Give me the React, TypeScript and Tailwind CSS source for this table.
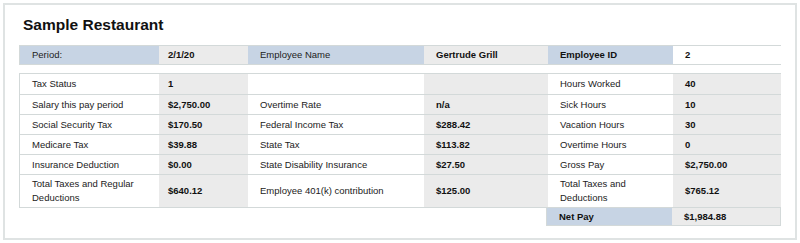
import React from 'react';

type Row = [string, string, string, string, string, string];

const rows: Row[] = [
  ['Tax Status', '1', '', '', 'Hours Worked', '40'],
  ['Salary this pay period', '$2,750.00', 'Overtime Rate', 'n/a', 'Sick Hours', '10'],
  ['Social Security Tax', '$170.50', 'Federal Income Tax', '$288.42', 'Vacation Hours', '30'],
  ['Medicare Tax', '$39.88', 'State Tax', '$113.82', 'Overtime Hours', '0'],
  ['Insurance Deduction', '$0.00', 'State Disability Insurance', '$27.50', 'Gross Pay', '$2,750.00'],
  ['Total Taxes and Regular Deductions', '$640.12', 'Employee 401(k) contribution', '$125.00', 'Total Taxes and Deductions', '$765.12'],
];

const cols = 'grid grid-cols-[139px_89px_176px_124px_125px_108px]';

function Cell({ children, bold, gray, blue, wrap, pad = 'pl-3' }: {
  children?: React.ReactNode;
  bold?: boolean;
  gray?: boolean;
  blue?: boolean;
  wrap?: string;
  pad?: string;
}) {
  const bg = blue ? 'bg-[#c7d4e4]' : gray ? 'bg-[#ebebeb]' : 'bg-white';
  return (
    <div className={`flex items-center ${pad} pr-2 ${bg} ${bold ? 'font-bold text-[#111]' : 'text-[#222]'}`}>
      <span className={wrap}>{children}</span>
    </div>
  );
}

export default function App() {
  return (
    <div className="w-[800px] h-[243px] bg-white p-[3px] font-['Liberation_Sans',Arial,sans-serif] text-[9.5px] leading-[14px]">
      <div className="h-[237px] border-2 border-[#dfe3e3] pt-[11px] px-[14px]">
        <h1 className="pl-[4px] text-[15.5px] leading-[18px] font-bold text-[#111]">Sample Restaurant</h1>

        {/* header strip */}
        <div className={`${cols} mt-[11px] h-[20px] border border-[#d3d9d9]`}>
          <Cell blue>Period:</Cell>
          <Cell gray bold pad="pl-[9px]">2/1/20</Cell>
          <Cell blue>Employee Name</Cell>
          <Cell gray bold>Gertrude Grill</Cell>
          <Cell blue bold>Employee ID</Cell>
          <Cell bold>2</Cell>
        </div>

        {/* pay details */}
        <div className="mt-[8px] border border-[#d3d9d9]">
          {rows.map((r, i) => {
            const last = i === rows.length - 1;
            const h = i === 0 ? 'h-[21px]' : last ? 'min-h-[32px]' : 'h-[20px]';
            return (
              <div key={i} className={`${cols} ${last ? '' : 'border-b border-[#d3d9d9]'} ${h}`}>
                <Cell wrap="block w-[110px]">{r[0]}</Cell>
                <Cell gray bold pad="pl-[9px]">{r[1]}</Cell>
                <Cell>{r[2]}</Cell>
                <Cell gray bold>{r[3]}</Cell>
                <Cell wrap="block w-[90px]">{r[4]}</Cell>
                <Cell gray bold>{r[5]}</Cell>
              </div>
            );
          })}
        </div>
        <div className="flex justify-end">
          <div className="grid grid-cols-[125px_108px] h-[18px] border border-t-0 border-[#d3d9d9]">
            <Cell blue bold>Net Pay</Cell>
            <Cell gray bold>$1,984.88</Cell>
          </div>
        </div>
      </div>
    </div>
  );
}
